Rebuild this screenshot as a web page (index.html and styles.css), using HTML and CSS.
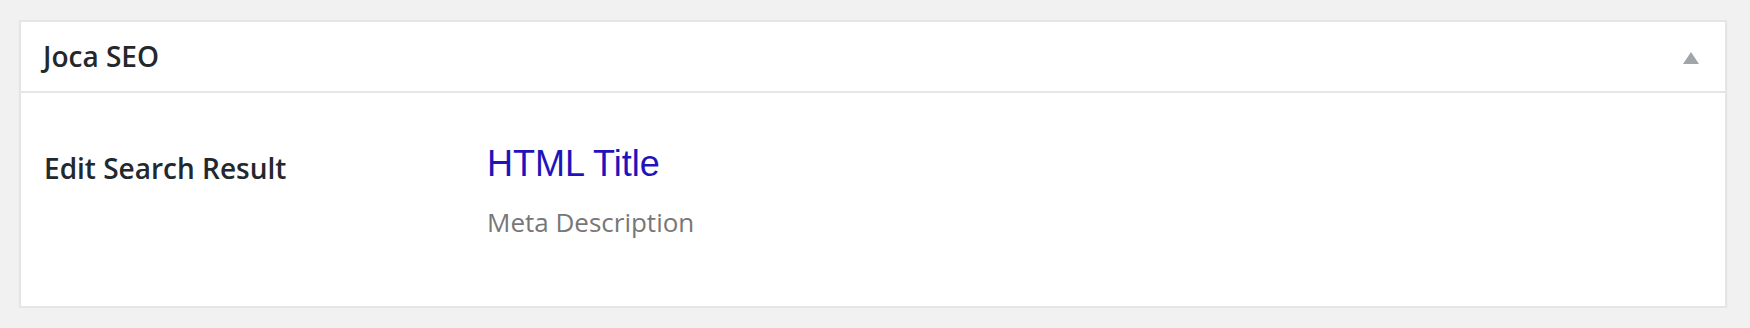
FILE: index.html
```html
<!DOCTYPE html>
<html>
<head>
<meta charset="utf-8">
<link rel="stylesheet" href="styles.css">
</head>
<body>
<div class="postbox">
  <div class="postbox-header">
    <h2 class="hndle">Joca SEO</h2>
    <svg class="toggle" width="16" height="12" viewBox="0 0 16 12"><polygon points="8,0 16,12 0,12" fill="#a0a5aa"/></svg>
  </div>
  <div class="inside">
    <div class="row">
      <div class="label">Edit Search Result</div>
      <div class="preview">
        <div class="serp-title">HTML Title</div>
        <div class="serp-desc">Meta Description</div>
      </div>
    </div>
  </div>
</div>
</body>
</html>
```

FILE: styles.css
```css
html, body {
  margin: 0;
  padding: 0;
  background: #f1f1f1;
}
body {
  padding: 20px 23px 0 19px;
  font-family: "Open Sans", "Liberation Sans", sans-serif;
}
.postbox {
  background: #fff;
  border: 2px solid #e5e5e5;
  box-shadow: 0 2px 2px rgba(0,0,0,0.04);
  width: 1704px;
}
.postbox-header {
  display: flex;
  align-items: center;
  justify-content: space-between;
  height: 69px;
  border-bottom: 2px solid #e5e5e5;
  padding-left: 22px;
}
.hndle {
  margin: 0;
  font-size: 28px;
  font-weight: 600;
  line-height: 69px;
  color: #23282d;
}
.toggle {
  margin-right: 26px;
  margin-top: 3px;
}
.inside {
  padding: 51px 0 66px 23px;
}
.row {
  display: flex;
}
.label {
  width: 443px;
  padding-top: 4px;
  font-size: 28px;
  font-weight: 600;
  line-height: 40px;
  color: #23282d;
}
.serp-title {
  font-family: "Liberation Sans", Arial, sans-serif;
  font-size: 36px;
  line-height: 40px;
  color: #1f14bb;
}
.serp-desc {
  margin-top: 20px;
  font-size: 26px;
  line-height: 36px;
  color: #777;
}
```
